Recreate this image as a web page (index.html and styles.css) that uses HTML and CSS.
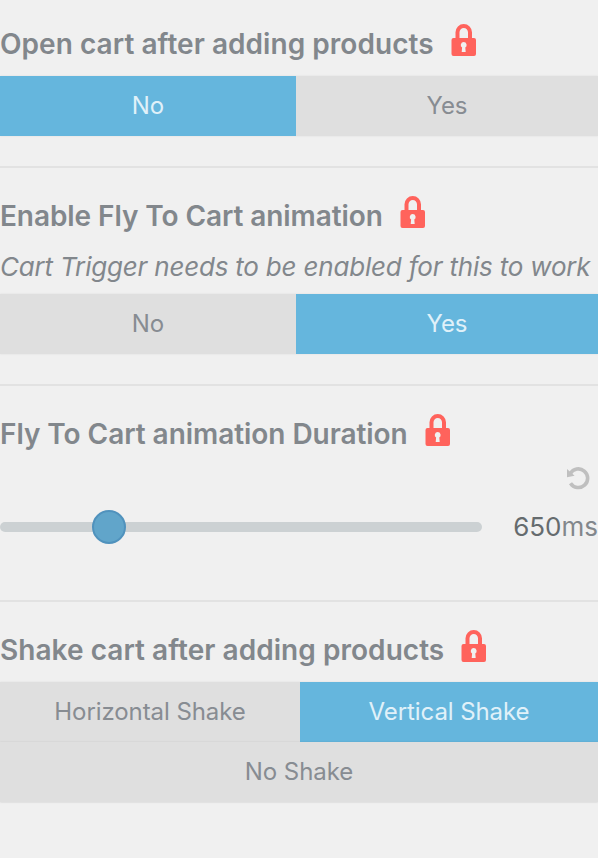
FILE: index.html
```html
<!DOCTYPE html>
<html lang="en">
<head>
<meta charset="utf-8">
<title>Cart settings</title>
<link rel="stylesheet" href="styles.css">
</head>
<body>
<svg width="0" height="0" class="defs">
  <symbol id="lock" viewBox="0 0 26 34">
    <path class="shackle" d="M6.500 16V9.300a6.250 6.300 0 0 1 12.500 0V16"/>
    <path fill-rule="evenodd" d="M2.500 15H23a2 2 0 0 1 2 2V31a2 2 0 0 1-2 2H2.500a2 2 0 0 1-2-2V17a2 2 0 0 1 2-2ZM12.700 19a3 3 0 0 0-1.600 5.500L10.700 29h4l-.4-4.500A3 3 0 0 0 12.700 19Z"/>
  </symbol>
</svg>
<main>
  <section class="setting first">
    <h3><span class="loose">Open cart after adding products</span><svg class="lock"><use href="#lock"/></svg></h3>
    <div class="buttons">
      <div class="btn no on">No</div><div class="btn">Yes</div>
    </div>
  </section>
  <section class="setting">
    <h3><span class="tight">Enable Fly To Cart animation</span><svg class="lock"><use href="#lock"/></svg></h3>
    <p class="description">Cart Trigger needs to be enabled for this to work</p>
    <div class="buttons">
      <div class="btn no">No</div><div class="btn on">Yes</div>
    </div>
  </section>
  <section class="setting duration">
    <h3><span class="snug">Fly To Cart animation Duration</span><svg class="lock"><use href="#lock"/></svg></h3>
    <div class="reset"><svg width="24" height="24" viewBox="0 0 24 24"><path class="arc" d="M4.300 7.600A9.300 9.300 0 1 1 4.500 17.200"/><path class="head" d="M1 3v8.200l7.600-1.500Z"/></svg></div>
    <div class="slider">
      <div class="track"><span class="thumb"></span></div>
      <div class="value"><b>650</b>ms</div>
    </div>
  </section>
  <section class="setting last">
    <h3><span class="loose">Shake cart after adding products</span><svg class="lock"><use href="#lock"/></svg></h3>
    <div class="buttons">
      <div class="btn half">Horizontal Shake</div><div class="btn on">Vertical Shake</div><div class="btn full">No Shake</div>
    </div>
  </section>
</main>
</body>
</html>
```
FILE: styles.css
```css
* { box-sizing: border-box; }
body {
  margin: 0;
  height: 858px;
  overflow: hidden;
  background: #f0f0f0;
  color: #82878c;
  font-family: Inter, "Liberation Sans", sans-serif;
}
.defs { display: block; position: absolute; }
.setting {
  padding: 26px 0 30px;
  border-bottom: 2px solid #e2e2e2;
}
.first { padding-top: 22px; }
.last { border-bottom: 0; }
h3 {
  display: flex;
  gap: 17px;
  height: 44px;
  margin: 0;
  font-size: 28px;
  font-weight: 600;
  line-height: 44px;
  white-space: nowrap;
}
.loose { letter-spacing: .045px; }
.tight { letter-spacing: -.08px; }
.snug { letter-spacing: -.05px; }
.first h3, .last h3 { margin-bottom: 10px; }
.lock {
  flex: none;
  width: 26px;
  height: 34px;
  margin-top: 1px;
  fill: #ff635c;
}
.shackle {
  fill: none;
  stroke: #ff635c;
  stroke-width: 4;
}
.description {
  height: 32px;
  margin: 13px 0 11px;
  font-size: 26px;
  font-style: italic;
  letter-spacing: -.2px;
  line-height: 32px;
  white-space: nowrap;
}
.buttons {
  display: flex;
  flex-wrap: wrap;
  box-shadow: 0 0 2px rgba(0, 0, 0, .08);
}
.btn {
  flex: 1;
  height: 60px;
  background: #dfdfdf;
  color: #878c92;
  font-size: 24px;
  letter-spacing: -.08px;
  line-height: 60px;
  text-align: center;
}
.no { flex: 0 0 296px; }
.half { flex: 0 0 300px; }
.full {
  flex: 0 0 100%;
  box-shadow: 0 0 2px rgba(0, 0, 0, .1);
}
.on {
  background: #65b6dd;
  color: #e0f1f9;
}
.duration { padding-bottom: 55px; }
.reset {
  display: flex;
  justify-content: flex-end;
  height: 24px;
  margin-top: 10px;
  padding-right: 8px;
}
.arc {
  fill: none;
  stroke: #bfbfbf;
  stroke-width: 3.600;
}
.head { fill: #bfbfbf; }
.slider {
  display: flex;
  justify-content: space-between;
  align-items: center;
  height: 36px;
  margin-top: 19px;
}
.track {
  display: flex;
  align-items: center;
  width: 482px;
  height: 10px;
  border-radius: 5px;
  background: #ccd1d3;
}
.thumb {
  width: 34px;
  height: 34px;
  margin-left: 92px;
  border: 2px solid #5092bd;
  border-radius: 50%;
  background: #61a5ca;
}
.value {
  font-size: 26px;
  line-height: 36px;
}
.value b {
  color: #656b6e;
  font-weight: 400;
}
```
